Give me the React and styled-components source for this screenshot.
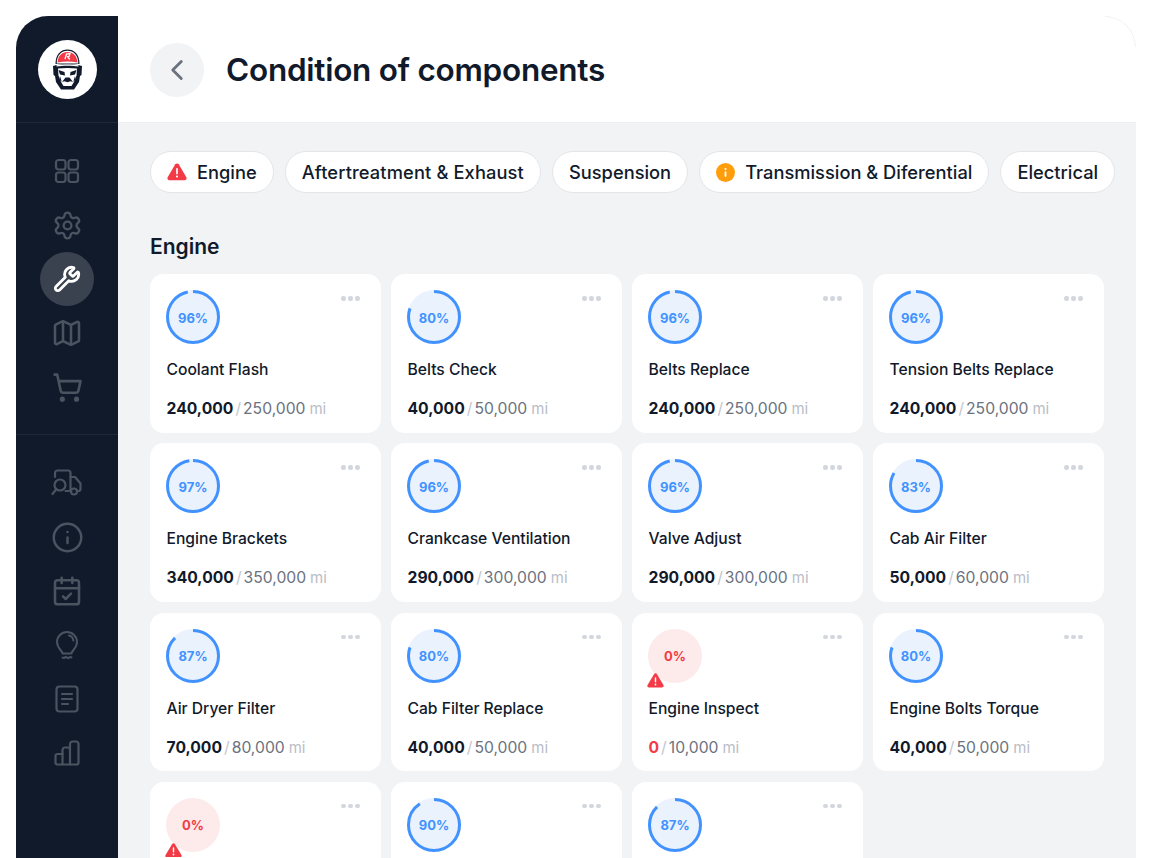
import React from 'react';
import styled, {createGlobalStyle} from 'styled-components';
import {Settings, Wrench, Map as MapIcon, ShoppingCart, Info, CalendarCheck, ChevronLeft} from 'lucide-react';

const GlobalStyle = createGlobalStyle`
  html, body {
    margin: 0;
    height: 858px;
    overflow: hidden;
    background: #ffffff;
    font-family: Inter, "Liberation Sans", sans-serif;
    color: #111a2b;
  }
`;

const Page = styled.div`
  box-sizing: border-box;
  height: 858px;
  padding: 16px 0 0 16px;
  overflow: hidden;
`;

const Frame = styled.div`
  display: flex;
  width: 1120px;
  height: 842px;
  overflow: hidden;
  border-radius: 32px 32px 0 0;
`;

const Sidebar = styled.aside`
  flex: 0 0 102px;
  background: #111a2b;
  display: flex;
  flex-direction: column;
`;

const LogoBar = styled.div`
  height: 107px;
  box-sizing: border-box;
  border-bottom: 1px solid #1f2838;
  display: flex;
  justify-content: center;
  padding-top: 24px;
`;

const LogoDisc = styled.div`
  width: 59px;
  height: 59px;
  border-radius: 50%;
  background: #ffffff;
  display: flex;
  align-items: center;
  justify-content: center;
`;

const NavGroup = styled.nav`
  display: flex;
  flex-direction: column;
  align-items: center;
  padding: ${p => p.$top}px 0 20px;
  border-bottom: ${p => (p.$divider ? '1px solid #1f2838' : 'none')};
`;

const NavItem = styled.div`
  width: 54px;
  height: 54px;
  border-radius: 50%;
  display: flex;
  align-items: center;
  justify-content: center;
  color: ${p => (p.$active ? '#ffffff' : '#4b5360')};
  background: ${p => (p.$active ? '#3a4250' : 'transparent')};
`;

const Main = styled.main`
  flex: 1;
  min-width: 0;
  display: flex;
  flex-direction: column;
  background: #f2f3f5;
`;

const Header = styled.header`
  position: relative;
  flex: 0 0 107px;
  box-sizing: border-box;
  background: #ffffff;
  border-bottom: 1px solid #eceef1;
  display: flex;
  align-items: center;
  gap: 22px;
  padding: 1px 32px 0;
  &::after {
    content: '';
    position: absolute;
    top: 0;
    right: 0;
    width: 31px;
    height: 31px;
    box-sizing: border-box;
    border-top: 1px solid #eceef1;
    border-right: 1px solid #eceef1;
    border-top-right-radius: 32px;
  }
`;

const BackButton = styled.button`
  width: 54px;
  height: 54px;
  padding: 0;
  border: none;
  border-radius: 50%;
  background: #f2f3f5;
  color: #6b7280;
  display: flex;
  align-items: center;
  justify-content: center;
`;

const Title = styled.h1`
  margin: 0;
  font-size: 31.5px;
  line-height: 40px;
  font-weight: 600;
  letter-spacing: -0.25px;
`;

const Content = styled.div`
  padding: 28px 0 0 32px;
`;

const Chips = styled.div`
  display: flex;
  gap: 11px;
`;

const Chip = styled.div`
  box-sizing: border-box;
  height: 42px;
  padding: 0 16px;
  display: flex;
  align-items: center;
  gap: 10px;
  background: #ffffff;
  border: 1px solid #e3e5e9;
  border-radius: 21px;
  font-size: 18.3px;
  font-weight: 500;
  letter-spacing: ${p => p.$track || 0}px;
  white-space: nowrap;
`;

const SectionTitle = styled.h2`
  margin: 41px 0 14px;
  font-size: 21px;
  line-height: 26px;
  font-weight: 600;
`;

const Grid = styled.div`
  display: grid;
  grid-template-columns: repeat(4, 230.5px);
  grid-auto-rows: 158.75px;
  gap: 10.5px;
`;

const Card = styled.article`
  position: relative;
  box-sizing: border-box;
  padding: 16px;
  background: #ffffff;
  border-radius: 14px;
`;

const Dots = styled.div`
  position: absolute;
  top: 22px;
  right: 21px;
  display: flex;
  gap: 2.5px;
  i {
    width: 4.5px;
    height: 4.5px;
    border-radius: 50%;
    background: #d3d6dc;
  }
`;

const RingBox = styled.div`
  position: relative;
  width: 54px;
  height: 54px;
`;

const RingLabel = styled.span`
  position: absolute;
  inset: 1px 0 0;
  display: flex;
  align-items: center;
  justify-content: center;
  font-size: 13px;
  font-weight: 700;
  color: ${p => (p.$zero ? '#f23b46' : '#4192ff')};
`;

const Badge = styled.span`
  position: absolute;
  left: -1px;
  bottom: -5.5px;
  display: flex;
`;

const CardName = styled.div`
  margin: 16px 0 0 0.5px;
  font-size: 15.65px;
  line-height: 20px;
  font-weight: 500;
  white-space: nowrap;
`;

const Reading = styled.div`
  margin: 18px 0 0 0.5px;
  font-size: 15.7px;
  line-height: 22px;
  white-space: nowrap;
`;

const Current = styled.b`
  font-weight: 700;
  color: ${p => (p.$zero ? '#f23b46' : '#111a2b')};
`;

const Slash = styled.span`
  color: #c2c6cf;
  margin: 0 2px;
`;

const Limit = styled.span`
  color: #6b7280;
`;

const Unit = styled.span`
  color: #b9bdc6;
  font-size: 15px;
  margin-left: 4px;
`;

const WarningIcon = ({size = 17}) => (
  <svg width={size} height={size * 0.86} viewBox="0 0 21 18">
    <path d="M8.7 1.4a2.1 2.1 0 0 1 3.6 0l8 13.5a2.1 2.1 0 0 1-1.8 3.1h-16A2.1 2.1 0 0 1 .7 14.9z" fill="#f23b46" />
    <rect x="9.6" y="5.2" width="1.8" height="6.6" rx=".9" fill="#fff" />
    <circle cx="10.5" cy="14.2" r="1.1" fill="#fff" />
  </svg>
);

const InfoDot = () => (
  <svg width="19" height="19" viewBox="0 0 19 19">
    <circle cx="9.5" cy="9.5" r="9.5" fill="#ff9d0a" />
    <circle cx="9.5" cy="6" r="1.1" fill="#fff" />
    <rect x="8.6" y="8.3" width="1.8" height="5.6" rx=".8" fill="#fff" />
  </svg>
);

const Logo = () => (
  <svg width="31" height="41" viewBox="0 0 31 41">
    <path d="M3.500 15C3.500 5 9 .5 15.500 .5S27.500 5 27.500 15z" fill="#111a2b" />
    <path d="M4.700 14.500C4.700 6 9.500 1.700 15.500 1.700S26.300 6 26.300 14.500z" fill="#fff" />
    <path d="M5.500 13.500C6 6.500 10 3 15.500 3S25 6.500 25.500 13.500C19 12 12 12 5.500 13.500z" fill="#f23b46" />
    <path d="M13 10l1.500-5 3.500-.5-.8 2.800-1.500.4 2 2.800" stroke="#fff" strokeWidth="1.300" fill="none" />
    <path d="M1 17C6 14.500 25 14.500 30 17l-.5 9-1.500 1-1 6-5 7.500H9L4 33l-1-6-1.500-1z" fill="#111a2b" />
    <path d="M4.500 16.200c6-1 16-1 22 0v1.300c-6-1-16-1-22 0z" fill="#fff" />
    <path d="M6 19.500c6-.8 13-.8 19 0l-.5 7-2 5.500-3 5h-8l-3-5-2-5.500z" fill="#fff" />
    <path d="M6.500 21l6 2 .5 3.500-5-1zM24.500 21l-6 2-.5 3.500 5-1z" fill="#111a2b" />
    <path d="M13.500 28.500h4l3.500 4.500-2.500-.8-3 1-3-1-2.500.8z" fill="#111a2b" />
    <path d="M8 27l1.500 5-.5 1-1.500-3zM23 27l-1.500 5 .5 1 1.500-3z" fill="#111a2b" />
  </svg>
);

const GridIcon = () => (
  <svg width="26" height="26" viewBox="0 0 26 26" fill="none" stroke="currentColor" strokeWidth="2.200">
    <rect x="2" y="2" width="9.500" height="9.500" rx="2.500" />
    <rect x="14.500" y="2" width="9.500" height="9.500" rx="2.500" />
    <rect x="2" y="14.500" width="9.500" height="9.500" rx="2.500" />
    <rect x="14.500" y="14.500" width="9.500" height="9.500" rx="2.500" />
  </svg>
);

const TruckSearchIcon = () => (
  <svg width="32" height="28" viewBox="0 0 32 28" fill="none" stroke="currentColor" strokeWidth="2.200" strokeLinecap="round" strokeLinejoin="round">
    <path d="M4 8V4a2.500 2.500 0 0 1 2.500-2.500H17A2.500 2.500 0 0 1 19.500 4v18h-5" />
    <path d="M19.500 8h4.500l5.500 6.500V20a2 2 0 0 1-2 2h-.5" />
    <circle cx="9" cy="16" r="5.500" />
    <path d="M5 20.500L1.500 25" />
    <circle cx="23" cy="22.500" r="3" />
  </svg>
);

const BulbIcon = () => (
  <svg width="24" height="30" viewBox="0 0 24 30" fill="none" stroke="currentColor" strokeWidth="2" strokeLinecap="round" strokeLinejoin="round">
    <path d="M7.500 23.500c0-3-5.500-5-5.500-11.500a10 10 0 0 1 20 0c0 6.500-5.500 8.500-5.500 11.500z" />
    <path d="M14 5.500c2.500.5 4 2.500 4.300 5" />
    <path d="M7.500 27.500c1 .8 1.500.8 2.250 0s1.500-.8 2.250 0 1.500.8 2.250 0 1.500-.8 2.250 0" />
  </svg>
);

const DocIcon = () => (
  <svg width="24" height="28" viewBox="0 0 24 28" fill="none" stroke="currentColor" strokeWidth="2.200" strokeLinecap="round" strokeLinejoin="round">
    <rect x="1.500" y="1.500" width="21" height="25" rx="3" />
    <path d="M7 9h10M7 14h10M7 19h6" />
  </svg>
);

const BarsIcon = () => (
  <svg width="26" height="26" viewBox="0 0 26 26" fill="none" stroke="currentColor" strokeWidth="2.200" strokeLinecap="round" strokeLinejoin="round">
    <path d="M8.500 24.500H3.500a2 2 0 0 1-2-2V16a2 2 0 0 1 2-2h5" />
    <path d="M8.500 24.500V10a2.500 2.500 0 0 1 2.500-2.500h2.500A2.500 2.500 0 0 1 16 10v14.500z" />
    <path d="M16 24.500h6.500a2 2 0 0 0 2-2V4a2.500 2.500 0 0 0-2.500-2.500h-3.500A2.500 2.500 0 0 0 16 4v6" />
  </svg>
);

const Ring = ({value, warn}) => {
  const radius = 25.5;
  const length = 2 * Math.PI * radius;
  const zero = value === 0;
  return (
    <RingBox>
      <svg width="54" height="54" viewBox="0 0 54 54">
        <circle cx="27" cy="27" r="27" fill={zero ? '#fdeaea' : '#eaf2fe'} />
        {!zero && (
          <circle
            cx="27"
            cy="27"
            r={radius}
            fill="none"
            stroke="#4192ff"
            strokeWidth="3"
            strokeDasharray={`${(length * value) / 100} ${length}`}
            transform="rotate(-90 27 27)"
          />
        )}
      </svg>
      <RingLabel $zero={zero}>{value}%</RingLabel>
      {warn && <Badge><WarningIcon /></Badge>}
    </RingBox>
  );
};

const sideTop = [
  <GridIcon key="grid" />,
  <Settings key="gear" size={31} strokeWidth={1.8} />,
  <Wrench key="wrench" size={28} strokeWidth={2.4} />,
  <MapIcon key="map" size={32} strokeWidth={1.9} />,
  <ShoppingCart key="cart" size={31} strokeWidth={2} />
];

const sideBottom = [
  <TruckSearchIcon key="truck" />,
  <Info key="info" size={33} strokeWidth={1.8} />,
  <CalendarCheck key="cal" size={32} strokeWidth={1.9} />,
  <BulbIcon key="bulb" />,
  <DocIcon key="doc" />,
  <BarsIcon key="bars" />
];

const chips = [
  {label: 'Engine', icon: <WarningIcon size={20} />},
  {label: 'Aftertreatment & Exhaust', track: 0.12},
  {label: 'Suspension'},
  {label: 'Transmission & Diferential', icon: <InfoDot />},
  {label: 'Electrical'}
];

const cards = [
  {name: 'Coolant Flash', value: 96, current: '240,000', limit: '250,000'},
  {name: 'Belts Check', value: 80, current: '40,000', limit: '50,000'},
  {name: 'Belts Replace', value: 96, current: '240,000', limit: '250,000'},
  {name: 'Tension Belts Replace', value: 96, current: '240,000', limit: '250,000'},
  {name: 'Engine Brackets', value: 97, current: '340,000', limit: '350,000'},
  {name: 'Crankcase Ventilation', value: 96, current: '290,000', limit: '300,000'},
  {name: 'Valve Adjust', value: 96, current: '290,000', limit: '300,000'},
  {name: 'Cab Air Filter', value: 83, current: '50,000', limit: '60,000'},
  {name: 'Air Dryer Filter', value: 87, current: '70,000', limit: '80,000'},
  {name: 'Cab Filter Replace', value: 80, current: '40,000', limit: '50,000'},
  {name: 'Engine Inspect', value: 0, current: '0', limit: '10,000', warn: true},
  {name: 'Engine Bolts Torque', value: 80, current: '40,000', limit: '50,000'},
  {name: '', value: 0, current: '', limit: '', warn: true},
  {name: '', value: 90, current: '', limit: ''},
  {name: '', value: 87, current: '', limit: ''}
];

const App = () => (
  <Page>
    <GlobalStyle />
    <Frame>
      <Sidebar>
        <LogoBar>
          <LogoDisc><Logo /></LogoDisc>
        </LogoBar>
        <NavGroup $top={21} $divider>
          {sideTop.map((icon, index) => (
            <NavItem key={icon.key} $active={index === 2}>{icon}</NavItem>
          ))}
        </NavGroup>
        <NavGroup $top={21}>
          {sideBottom.map(icon => <NavItem key={icon.key}>{icon}</NavItem>)}
        </NavGroup>
      </Sidebar>
      <Main>
        <Header>
          <BackButton aria-label="Back"><ChevronLeft size={34} strokeWidth={2} /></BackButton>
          <Title>Condition of components</Title>
        </Header>
        <Content>
          <Chips>
            {chips.map(chip => (
              <Chip key={chip.label} $track={chip.track}>{chip.icon}{chip.label}</Chip>
            ))}
          </Chips>
          <SectionTitle>Engine</SectionTitle>
          <Grid>
            {cards.map((card, index) => (
              <Card key={index}>
                <Dots><i /><i /><i /></Dots>
                <Ring value={card.value} warn={card.warn} />
                <CardName>{card.name}</CardName>
                {card.limit && (
                  <Reading>
                    <Current $zero={card.value === 0}>{card.current}</Current>
                    <Slash>/</Slash>
                    <Limit>{card.limit}</Limit>
                    <Unit>mi</Unit>
                  </Reading>
                )}
              </Card>
            ))}
          </Grid>
        </Content>
      </Main>
    </Frame>
  </Page>
);

export default App;
